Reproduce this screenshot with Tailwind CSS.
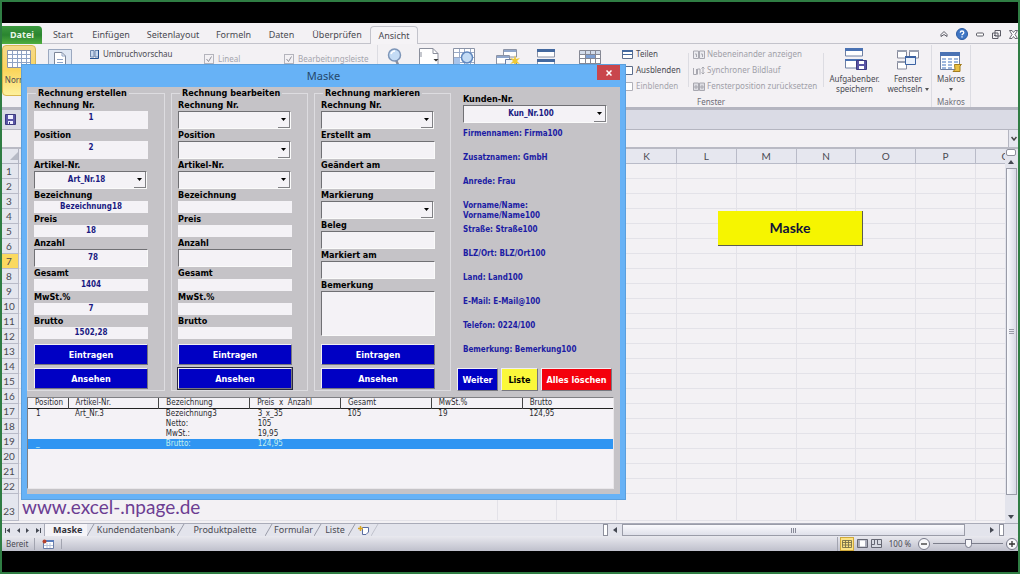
<!DOCTYPE html>
<html lang="de">
<head>
<meta charset="utf-8">
<title>Maske</title>
<script src="https://cdn.jsdelivr.net/npm/@tailwindcss/browser@4"></script>
</head>
<body class="h-screen overflow-hidden border-2 border-[#2f7d43] bg-black py-[21px] font-['Noto_Sans','Open_Sans',sans-serif] text-[9px] leading-3 text-[#4a4a52]">
<div class="relative flex h-full flex-col bg-[#f3f1f4]">

  <!-- Ribbon tabs -->
  <header class="flex h-[21px] shrink-0 items-end border-b border-[#c3c3cb]">
    <nav class="-mb-px flex h-[18px] items-stretch text-center">
      <a href="#" class="flex w-10 items-center justify-center rounded-tr-sm bg-linear-to-b from-[#3c9a3f] via-[#2a8530] to-[#4fae3e] font-bold text-[#e9f6e6]">Datei</a>
      <a href="#" class="flex w-[42px] items-center justify-center">Start</a>
      <a href="#" class="flex w-[54px] items-center justify-center">Einfügen</a>
      <a href="#" class="flex w-[70px] items-center justify-center">Seitenlayout</a>
      <a href="#" class="flex w-[51px] items-center justify-center">Formeln</a>
      <a href="#" class="flex w-[45px] items-center justify-center">Daten</a>
      <a href="#" class="flex w-[66px] items-center justify-center">Überprüfen</a>
      <a href="#" class="flex w-12 items-center justify-center rounded-t-sm border border-b-0 border-[#c3c3cb] bg-[#f5f3f6]">Ansicht</a>
    </nav>
    <div class="ml-auto flex h-[18px] items-center gap-2">
      <button aria-label="Menüband minimieren"><svg class="h-2 w-2" viewBox="0 0 8 8" fill="none" stroke="#5c5c66"><path d="M1 4.500 4 1.500 7 4.500V6.500L4 4.500 1 6.500Z"/></svg></button>
      <button aria-label="Hilfe"><svg class="h-3 w-3" viewBox="0 0 12 12"><circle cx="6" cy="6" r="5.500" fill="#3f76c4" stroke="#2b5aa0"/><path d="M4.200 4.600Q4.300 3 6 3T7.800 4.600Q7.800 5.500 6.700 6.100Q6 6.500 6 7.200M6 8.300V9.500" fill="none" stroke="#fff" stroke-width="1.300"/></svg></button>
      <button aria-label="Minimieren"><svg class="h-2 w-2" viewBox="0 0 8 8"><rect x=".5" y="3" width="7" height="3" rx="1" fill="#fff" stroke="#5c5c66"/></svg></button>
      <button aria-label="Wiederherstellen"><svg class="h-[9px] w-[9px]" viewBox="0 0 9 9" fill="#f3f1f4" stroke="#5c5c66"><path d="M3 .5H8.500V6H3ZM.5 3H6V8.500H.5ZM2 5.500H4.500"/></svg></button>
      <button aria-label="Schließen"><svg class="h-[9px] w-[9px]" viewBox="0 0 9 9" fill="#fff" stroke="#5c5c66" stroke-width=".9"><path d="M.5.5H3L4.500 2.500 6 .5H8.500L6 4.500 8.500 8.500H6L4.500 6.500 3 8.500H.5L3 4.500Z"/></svg></button>
    </div>
  </header>

  <!-- Ribbon body -->
  <section class="flex h-[63px] shrink-0 pt-px text-[8px]">
    <button class="flex h-[51px] w-[34px] flex-col items-center gap-1.5 rounded-sm border border-[#d9b750] bg-linear-to-b from-[#f6d98a] via-[#fbd55b] to-[#fdf09b] pt-1">
      <svg class="h-[18px] w-6" viewBox="0 0 24 18"><path d="M.5.5H23.500V17.500H.5Z" fill="#fff" stroke="#8a93a8"/><path d="M1 4.500H23M1 8.500H23M1 12.500H23M5.500 1V17M10.500 1V17M14.500 1V17M19.500 1V17" stroke="#8fa3c4"/></svg>
      <span>Normal</span>
    </button>
    <button aria-label="Seitenlayout" class="flex w-12 justify-center pt-1"><svg class="h-[22px] w-6" viewBox="0 0 24 22"><path d="M.5.5H23.500V21.500H.5Z" fill="#dfe7f3" stroke="#9ba8bf"/><path d="M6.500 3.500H14L17.500 7V21.500H6.500Z" fill="#fff" stroke="#7d8799"/><path d="M14 3.500V7H17.500M9 10.500H15M9 13.500H15M9 16.500H15" fill="none" stroke="#8fa3c4"/></svg></button>
    <button class="flex h-[18px] w-[119px] items-center gap-1 pl-1.5"><svg class="h-[9px] w-[9px]" viewBox="0 0 9 9"><path d="M.5.5H4V7H.5ZM5 .5H8.500V7H5Z" fill="#c9d8ee" stroke="#6c86ae"/><path d="M8.500 0V8.500H0" fill="none" stroke="#24508f"/></svg>Umbruchvorschau</button>
    <label class="flex h-7 w-20 items-center gap-1 pl-px text-[#a5a5ad]"><input type="checkbox" checked disabled class="peer hidden"><svg class="h-2.5 w-2.5" viewBox="0 0 10 10" fill="none"><rect x=".5" y=".5" width="9" height="9" stroke="#b4b4bc"/><path d="M2.500 5 4.500 7.500 7.500 2.500" stroke="#90909a"/></svg>Lineal</label>
    <label class="flex h-7 w-[95px] items-center gap-1 border-r border-[#dcdce2] pl-px text-[#a5a5ad]"><input type="checkbox" checked disabled class="peer hidden"><svg class="h-2.5 w-2.5 shrink-0" viewBox="0 0 10 10" fill="none"><rect x=".5" y=".5" width="9" height="9" stroke="#b4b4bc"/><path d="M2.500 5 4.500 7.500 7.500 2.500" stroke="#90909a"/></svg>Bearbeitungsleiste</label>
    <button aria-label="Zoom" class="flex w-[34px] justify-center pt-[3px]"><svg class="h-5 w-4" viewBox="0 0 16 20"><path d="M9 12 12 19" stroke="#8b8f9c" stroke-width="2.500"/><circle cx="7.500" cy="7" r="6" fill="#c4dcf5" stroke="#7d95b8" stroke-width="1.500"/><path d="M4 6Q5 3 8 3" stroke="#fff" stroke-width="1.500" fill="none"/></svg></button>
    <button aria-label="100%" class="flex w-[34px] justify-center pt-[3px]"><svg class="h-5 w-5" viewBox="0 0 20 20"><path d="M.5.5H14L19 5.500V20H.5Z" fill="#fff" stroke="#8b8f9c"/><path d="M14 .5V5.500H19M2 4V9" fill="none" stroke="#8b8f9c"/><path d="M14.500 11H19.500L17 13.500Z" fill="#333"/></svg></button>
    <button aria-label="Auswahlzoom" class="flex w-9 justify-center pt-[3px]"><svg class="h-5 w-[22px]" viewBox="0 0 22 20"><path d="M.5.5H21.500V20H.5Z" fill="#fff" stroke="#8b93a6"/><path d="M1 4.500H21M1 9.500H21M1 14.500H21M6.500 1V20M11.500 1V20M17.500 1V20" stroke="#9aabc8"/><path d="M1 10H7V20H1Z" fill="#a9c4ea"/><circle cx="14" cy="9.500" r="5.500" fill="#c4dcf5" stroke="#5f86bd" stroke-width="1.500"/></svg></button>
    <button aria-label="Neues Fenster" class="flex w-[52px] justify-center pt-1"><svg class="h-[18px] w-6" viewBox="0 0 24 18"><path d="M7.500.5H20.500V8H7.500ZM.5 6.500H13.500V15H.5Z" fill="#fff" stroke="#8b93a6"/><path d="M8 1H20V3H8ZM1 7H13V9H1Z" fill="#8fa6cb"/><path d="M9.500 10.500H20.500V18H9.500Z" fill="#eef3fa" stroke="#6a7fa6"/><path d="M19 6 20 10 24 9 21 12 24 15 20 14 19 18 18 14 14 15 17 12 14 9 18 10Z" fill="#f1ca37"/></svg></button>
    <button aria-label="Alle anordnen" class="flex w-6 justify-center pt-1"><svg class="h-[18px] w-[18px]" viewBox="0 0 18 18"><path d="M.5.5H17.500V8H.5ZM.5 10.500H17.500V18H.5Z" fill="#fff" stroke="#8b93a6"/><path d="M0 0H18V3H0ZM0 10H18V13H0Z" fill="#44699f"/></svg></button>
    <button aria-label="Fenster einfrieren" class="flex w-16 justify-center pt-[5px]"><svg class="h-[18px] w-[22px]" viewBox="0 0 22 18"><path d="M.5.5H21.500V18H.5Z" fill="#fff" stroke="#858894"/><path d="M1 1H21V4H1Z" fill="#d3dcea"/><path d="M1 4.500H21M1 8.500H21M1 13.500H21M6.500 1V18M11.500 1V18M16.500 1V18" stroke="#858894"/><path d="M7 5H16V8H7Z" fill="#7ea0d3"/></svg></button>
    <div class="flex w-[66px] flex-col items-start gap-1 pt-[3px]">
      <button class="flex items-center gap-[3px]"><svg class="h-[9px] w-[11px]" viewBox="0 0 11 9"><path d="M.5.5H10.500V8.500H.5Z" fill="#fff" stroke="#5c6d8c"/><path d="M0 0H11V2H0ZM1 4H10V5H1Z" fill="#44699f"/></svg>Teilen</button>
      <button class="flex items-center gap-[3px]"><svg class="h-[9px] w-[11px]" viewBox="0 0 11 9"><path d="M.5.5H10.500V8.500H.5Z" fill="#fff" stroke="#5c6d8c"/></svg>Ausblenden</button>
      <button class="flex items-center gap-[3px] text-[#a5a5ad]"><svg class="h-[9px] w-[11px]" viewBox="0 0 11 9"><path d="M.5.5H10.500V8.500H.5Z" fill="#fff" stroke="#b0b0b8"/></svg>Einblenden</button>
    </div>
    <div class="mt-2 mb-5 w-px bg-[#dcdce2]"></div>
    <div class="flex w-[134px] flex-col items-start gap-1 pt-[3px] pl-1 whitespace-nowrap text-[#a0a0a8]">
      <button class="flex items-center gap-0.5"><svg class="h-[9px] w-3" viewBox="0 0 12 9" fill="#ececf0" stroke="#a8a8b0"><path d="M.5 1H5.500V8.500H.5ZM6.500 1H11.500V8.500H6.500ZM2 4H3.500V7M8 4H9.500V7"/></svg>Nebeneinander anzeigen</button>
      <button class="flex items-center gap-0.5"><svg class="h-[9px] w-3" viewBox="0 0 12 9" fill="none" stroke="#a8a8b0"><path d="M.5 2V8.500H3.500V3M4.500 8.500V3H7V8.500M10 1V8M8.500 2.500 10 1 11.500 2.500M8.500 6.500 10 8 11.500 6.500"/></svg>Synchroner Bildlauf</button>
      <button class="flex items-center gap-0.5"><svg class="h-[9px] w-3" viewBox="0 0 12 9" fill="#dcdce2" stroke="#a8a8b0"><path d="M.5 1H5.500V8.500H.5ZM6.500 1H11.500V8.500H6.500ZM1 5H5M3 3V7M7 5H11M9 3V7"/></svg>Fensterposition zurücksetzen</button>
      <span class="pl-1 text-[#6d6d77]">Fenster</span>
    </div>
    <div class="mt-2 mb-5 w-px bg-[#dcdce2]"></div>
    <button class="flex w-[61px] flex-col items-center pt-[3px] leading-2.5"><svg class="mb-1 h-[22px] w-6" viewBox="0 0 24 22"><path d="M2.500.5H19.500V8H2.500ZM2.500 11.500H19.500V20H2.500Z" fill="#fff" stroke="#6e80a3"/><path d="M2 0H20V3H2ZM2 11H20V13H2Z" fill="#4a72b3"/><path d="M13.500 12.500H23.500V21.500H13.500Z" fill="#5a55a5" stroke="#3c3a80"/><path d="M16 13H21V16H16ZM16 18H21V21H16Z" fill="#fff"/></svg>Aufgabenber.<br>speichern</button>
    <button class="flex w-[46px] flex-col items-center pt-[5px] leading-2.5"><svg class="mb-1 h-5 w-[22px]" viewBox="0 0 22 20"><path d="M.5.5H9.500V8H.5ZM12.500.5H21.500V8H12.500ZM.5 11.500H9.500V19H.5Z" fill="#fff" stroke="#85889a"/><path d="M0 0H10V2H0ZM12 0H22V2H12ZM0 11H10V13H0Z" fill="#9aa0b0"/><path d="M8.500 6.500H18.500V14.500H8.500Z" fill="#eaf1fb" stroke="#3b62a3"/><path d="M8 6H19V8H8Z" fill="#3b62a3"/></svg>Fenster<span>wechseln <svg class="inline h-[3px] w-1" viewBox="0 0 4 3"><path d="M0 0H4L2 3Z" fill="#555"/></svg></span></button>
    <div class="flex w-10 flex-col items-center border-x border-[#dcdce2]">
      <button class="flex flex-col items-center pt-[7px] leading-2.5"><svg class="mb-0.5 h-5 w-[22px]" viewBox="0 0 22 20"><path d="M.5.5H19.500V17.500H.5Z" fill="#fff" stroke="#6e80a3"/><path d="M0 0H20V4H0Z" fill="#4a72b3"/><path d="M2 7H6M8 7H12M14 7H18M2 10H6M8 10H12M14 10H18M2 13H6M8 13H12M2 16H6M8 16H12" stroke="#9fb8de" stroke-width="2"/><path d="M14.500 12.500H21.500L20 14V19.500H13L15 17.500Z" fill="#e9c044" stroke="#a37d1d"/></svg>Makros<svg class="mt-1 h-[3px] w-1" viewBox="0 0 4 3"><path d="M0 0H4L2 3Z" fill="#555"/></svg></button>
      <span class="mt-[5px] text-[#6d6d77]">Makros</span>
    </div>
  </section>

  <!-- Quick access toolbar -->
  <div class="flex h-[23px] shrink-0 items-center border-y border-t-3 border-[#b4b5c0] bg-[#dadbe5] pl-[3px]">
    <button aria-label="Speichern"><svg class="h-[11px] w-[11px]" viewBox="0 0 11 11"><path d="M.5.5H10.500V10.500H.5Z" fill="#5a55a5" stroke="#3c3a80"/><path d="M3 1H8V5H3ZM3 7H8V10H3Z" fill="#eef"/><path d="M4 8H5V10H4Z" fill="#3c3a80"/></svg></button>
  </div>
  <!-- Formula bar -->
  <div class="flex h-[19px] shrink-0 border-b-2 border-[#b9bac4]">
    <input aria-label="Bearbeitungsleiste" class="min-w-0 flex-1 bg-transparent outline-none">
    <button aria-label="Bearbeitungsleiste erweitern" class="flex w-2.5 items-center justify-center border-l border-[#b4b5c0] bg-[#e6e7ef]"><svg class="h-[5px] w-1.5" viewBox="0 0 6 5" fill="none" stroke="#444" stroke-width="1.500"><path d="M.5 1 3 4 5.500 1"/></svg></button>
  </div>

  <!-- Worksheet -->
  <main class="flex min-h-0 flex-1">
    <div class="relative min-w-0 flex-1 overflow-hidden">
      <table class="w-[1034px] table-fixed border-separate border-spacing-0 font-[Lato,'Noto_Sans',sans-serif] text-[10px] leading-3.5">
        <thead><tr id="heads"><th class="h-[15px] w-[17px] border-r border-b border-[#b0b3c0] bg-[#e4e6ee] p-0"><svg class="ml-auto h-2 w-2" viewBox="0 0 8 8"><path d="M8 0V8H0Z" fill="#b6bac6"/></svg></th></tr></thead>
        <tbody id="rows"></tbody>
      </table>
      <button class="absolute top-[62px] left-[716px] h-[35px] w-[145px] border-r border-b border-[#5c5c50] bg-[#f6f500] font-[Lato,sans-serif] text-[14px] font-bold text-[#12123a]">Maske</button>
    </div>
    <div class="flex w-[13px] flex-col items-center bg-[#e3e4ec] pr-px">
      <div class="h-[7px] w-2.5 rounded-xs border border-[#8e909c] bg-white"></div>
      <button aria-label="Nach oben" class="flex h-3 items-center"><svg class="h-1 w-1.5" viewBox="0 0 6 4"><path d="M0 4 3 0 6 4Z" fill="#444852"/></svg></button>
      <div class="flex w-[11px] flex-1 items-center justify-center border border-[#9a9ca8] bg-linear-to-r from-[#fafafd] to-[#d8dae6]"><svg class="h-[5px] w-[5px]" viewBox="0 0 5 5" stroke="#999ba8"><path d="M0 .5H5M0 2.500H5M0 4.500H5"/></svg></div>
      <button aria-label="Nach unten" class="flex h-7 items-end pb-1"><svg class="h-1 w-1.5" viewBox="0 0 6 4"><path d="M0 0H6L3 4Z" fill="#444852"/></svg></button>
    </div>
  </main>

  <!-- Sheet tabs and horizontal scroll bar -->
  <div class="flex h-[13px] shrink-0 items-stretch border-t border-[#a9abb8] bg-[#e3e4ec]">
    <div class="flex w-[43px] items-center justify-around border-r border-[#a9abb8] text-[#444852]">
      <button aria-label="Erstes Blatt"><svg class="h-[5px] w-[5px]" viewBox="0 0 5 5" fill="currentColor"><path d="M0 0H1V5H0ZM5 0V5L1.500 2.500Z"/></svg></button>
      <button aria-label="Vorheriges Blatt"><svg class="h-[5px] w-[3px]" viewBox="0 0 3 5" fill="currentColor"><path d="M3 0V5L0 2.500Z"/></svg></button>
      <button aria-label="Nächstes Blatt"><svg class="h-[5px] w-[3px]" viewBox="0 0 3 5" fill="currentColor"><path d="M0 0V5L3 2.500Z"/></svg></button>
      <button aria-label="Letztes Blatt"><svg class="h-[5px] w-[5px]" viewBox="0 0 5 5" fill="currentColor"><path d="M4 0H5V5H4ZM0 0V5L3.500 2.500Z"/></svg></button>
    </div>
    <nav class="flex items-center">
      <a href="#" class="w-[42px] bg-[#f5f4f8] pl-2 font-bold text-[#33333b]">Maske</a>
      <svg class="h-3 w-2" viewBox="0 0 8 12"><path d="M0 12 7 0" stroke="#9a9ca8"/></svg>
      <a href="#" class="w-[82px] text-center">Kundendatenbank</a>
      <svg class="h-3 w-2" viewBox="0 0 8 12"><path d="M0 12 7 0" stroke="#9a9ca8"/></svg>
      <a href="#" class="w-20 text-center">Produktpalette</a>
      <svg class="h-3 w-2" viewBox="0 0 8 12"><path d="M0 12 7 0" stroke="#9a9ca8"/></svg>
      <a href="#" class="w-[41px] text-center">Formular</a>
      <svg class="h-3 w-2" viewBox="0 0 8 12"><path d="M0 12 7 0" stroke="#9a9ca8"/></svg>
      <a href="#" class="w-[26px] text-center">Liste</a>
      <svg class="h-3 w-2" viewBox="0 0 8 12"><path d="M0 12 7 0" stroke="#9a9ca8"/></svg>
      <button aria-label="Tabellenblatt einfügen" class="px-0.5"><svg class="h-[9px] w-[11px]" viewBox="0 0 11 9"><path d="M4.500 1.500H10.500V6L8 8.500H4.500Z" fill="#fff" stroke="#5a6da0"/><path d="M2.500 0V5M0 2.500H5" stroke="#d9a520" stroke-width="1.500"/></svg></button>
      <svg class="h-3 w-2" viewBox="0 0 8 12"><path d="M0 12 7 0" stroke="#c0c2cc"/></svg>
    </nav>
    <div class="ml-auto flex w-[415px] items-stretch gap-[3px]">
      <div class="w-[5px] border border-[#8e909c] bg-white"></div>
      <button aria-label="Nach links" class="flex w-2 items-center justify-center"><svg class="h-1.5 w-1" viewBox="0 0 4 6"><path d="M4 0V6L0 3Z" fill="#444852"/></svg></button>
      <div class="flex w-[343px] items-center justify-center border border-[#9a9ca8] bg-linear-to-b from-[#fafafd] to-[#dfe0ea]"><svg class="h-[5px] w-[5px]" viewBox="0 0 5 5" stroke="#888a98"><path d="M.5 0V5M2.500 0V5M4.500 0V5"/></svg></div>
      <button aria-label="Nach rechts" class="ml-auto flex w-2 items-center justify-center"><svg class="h-1.5 w-1" viewBox="0 0 4 6"><path d="M0 0V6L4 3Z" fill="#444852"/></svg></button>
      <div class="mr-3.5 w-[5px] border border-[#8e909c] bg-white"></div>
    </div>
  </div>

  <!-- Status bar -->
  <footer class="flex h-[15px] shrink-0 items-center bg-linear-to-b from-[#e9e9ef] to-[#bfc0cc] pl-1 text-[8px]">
    <span class="w-[29px] border-r border-[#a2a4b0]">Bereit</span>
    <button aria-label="Makro aufzeichnen" class="flex w-[27px] justify-center border-r border-[#a2a4b0]"><svg class="h-2.5 w-3" viewBox="0 0 12 10"><path d="M1.500 1.500H11.500V9.500H1.500Z" fill="#fff" stroke="#6a7da8"/><path d="M1 1H12V3H1Z" fill="#5a7dbd"/><circle cx="2.500" cy="2.500" r="2" fill="#b5432f"/><path d="M5 4V9M8 4V9M2 6.500H11" stroke="#b9c6de"/></svg></button>
    <div class="ml-auto flex items-center gap-[3px] border-l border-[#a2a4b0] pl-0.5">
      <button aria-label="Normal" class="flex h-[14px] w-[14px] items-center justify-center border border-[#d0a93a] bg-[#fbe283]"><svg class="h-2 w-2.5" viewBox="0 0 10 8" fill="none" stroke="#77704a"><path d="M.5.5H9.500V7.500H.5ZM0 2.500H10M0 5H10M3.500 0V8M6.500 0V8" stroke-width=".9"/></svg></button>
      <button aria-label="Seitenlayout"><svg class="h-[9px] w-[11px]" viewBox="0 0 11 9"><path d="M.5.5H10.500V8.500H.5Z" fill="#a9abb8" stroke="#666874"/><path d="M3 1.500H8V7.500H3Z" fill="#fff"/></svg></button>
      <button aria-label="Umbruchvorschau"><svg class="h-[9px] w-[11px]" viewBox="0 0 11 9"><path d="M.5.5H10.500V8.500H.5Z" fill="#d8dae2" stroke="#666874"/><path d="M3.500 1V5.500H.5M6.500 1V5.500H10" fill="none" stroke="#666874"/></svg></button>
      <span class="w-[30px] text-center">100 %</span>
      <button aria-label="Verkleinern"><svg class="h-3 w-3" viewBox="0 0 12 12"><circle cx="6" cy="6" r="5.500" fill="#f7f7fa" stroke="#77798a"/><path d="M3 6H9" stroke="#333" stroke-width="1.300"/></svg></button>
      <label class="flex items-center"><span class="sr-only">Zoom</span><input type="range" value="50" class="h-3 w-[70px] appearance-none bg-transparent [&::-webkit-slider-runnable-track]:h-px [&::-webkit-slider-runnable-track]:bg-[#7d7f8c] [&::-webkit-slider-thumb]:-mt-1 [&::-webkit-slider-thumb]:h-[9px] [&::-webkit-slider-thumb]:w-[7px] [&::-webkit-slider-thumb]:appearance-none [&::-webkit-slider-thumb]:rounded-b-sm [&::-webkit-slider-thumb]:border [&::-webkit-slider-thumb]:border-[#77798a] [&::-webkit-slider-thumb]:bg-[#f7f7fa]"></label>
      <button aria-label="Vergrößern"><svg class="h-3 w-3" viewBox="0 0 12 12"><circle cx="6" cy="6" r="5.500" fill="#f7f7fa" stroke="#77798a"/><path d="M3 6H9M6 3V9" stroke="#333" stroke-width="1.300"/></svg></button>
    </div>
  </footer>

  <!-- Form window -->
  <div role="dialog" aria-labelledby="dlg" class="absolute top-[41px] left-[19px] flex w-[605px] flex-col border border-[#5b9fdd] bg-[#67b2f6] px-[5px] pb-[5px] font-['DejaVu_Sans_Condensed','DejaVu_Sans',sans-serif] text-black">
    <div class="relative flex h-[22px] items-center justify-center font-['Noto_Sans',sans-serif] text-[11px] text-[#25476b]">
      <h1 id="dlg">Maske</h1>
      <button aria-label="Schließen" class="absolute top-0 right-0 flex h-[15px] w-[23px] items-center justify-center bg-[#c9464c]"><svg class="h-1.5 w-1.5" viewBox="0 0 6 6" stroke="#fff" stroke-width="1.500"><path d="M.5.5 5.500 5.500M5.500.5.5 5.500"/></svg></button>
    </div>
    <div class="bg-[#c5c3c7] pb-[5px]">
      <form class="flex gap-1.5 text-[9px] font-bold" onsubmit="return false">
        <fieldset id="f1" class="flex w-[138px] flex-col border border-[#dddce0] px-1.5 pb-px"><legend class="ml-0.5 px-0.5">Rechnung erstellen</legend></fieldset>
        <fieldset id="f2" class="flex w-[137px] flex-col border border-[#dddce0] px-1.5 pb-px"><legend class="ml-0.5 px-0.5">Rechnung bearbeiten</legend></fieldset>
        <fieldset id="f3" class="flex w-[137px] flex-col border border-[#dddce0] px-1.5 pb-px"><legend class="ml-0.5 px-0.5">Rechnung markieren</legend></fieldset>
        <div class="flex flex-1 flex-col pt-1.5">
          <div class="mb-1.5 ml-1.5 flex w-[144px] flex-col">
            <label for="kunde">Kunden-Nr.</label>
            <div class="relative h-[18px] border border-[#fafafa] border-t-[#707074] border-l-[#707074] bg-[#f4f2f6]">
              <select id="kunde" class="h-full w-full appearance-none pr-2 text-center text-[8px] font-bold text-[#1a1a82]"><option>Kun_Nr.100</option></select>
              <span class="pointer-events-none absolute inset-y-0 right-0 flex w-3 items-center justify-center border-r border-b border-[#808084] bg-[#f4f2f6]"><svg class="h-[3px] w-[5px]" viewBox="0 0 5 3"><path d="M0 0H5L2.500 3Z"/></svg></span>
            </div>
          </div>
          <div class="ml-1.5 flex flex-col text-[8px] leading-2.5 text-[#1c1ca4]">
            <p class="h-6">Firmennamen: Firma100</p>
            <p class="h-6">Zusatznamen: GmbH</p>
            <p class="h-6">Anrede: Frau</p>
            <p class="h-6">Vorname/Name:<br>Vorname/Name100</p>
            <p class="h-6">Straße: Straße100</p>
            <p class="h-6">BLZ/Ort: BLZ/Ort100</p>
            <p class="h-6">Land: Land100</p>
            <p class="h-6">E-Mail: E-Mail@100</p>
            <p class="h-6">Telefon: 0224/100</p>
            <p class="h-6">Bemerkung: Bemerkung100</p>
          </div>
          <div class="-mt-px flex gap-[3px]">
            <button class="h-[23px] w-[41px] border border-[#f0eef2] border-r-[#77777f] border-b-[#77777f] bg-[#0000c4] whitespace-nowrap text-white">Weiter</button>
            <button class="h-[23px] w-[37px] border border-[#f0eef2] border-r-[#77777f] border-b-[#77777f] bg-[#fbf83a]">Liste</button>
            <button class="h-[23px] w-[71px] border border-[#f0eef2] border-r-[#77777f] border-b-[#77777f] bg-[#f4000c] whitespace-nowrap text-white">Alles löschen</button>
          </div>
        </div>
      </form>
      <div class="mt-1.5 mr-1.5 h-[92px] border border-[#e9e7ea] border-t-[#808084] border-l-[#808084] bg-[#f4f2f6]">
        <table class="w-full table-fixed border-collapse text-left text-[8px] leading-2.5 text-[#2a2a2e]">
          <thead class="border-b border-[#222]">
            <tr><th class="w-10 border-r border-[#444] p-0 pl-[7px] font-normal">Position</th><th class="border-r border-[#444] p-0 pl-[7px] font-normal">Artikel-Nr.</th><th class="border-r border-[#444] p-0 pl-[7px] font-normal">Bezeichnung</th><th class="border-r border-[#444] p-0 pl-[7px] font-normal">Preis&nbsp; x&nbsp; Anzahl</th><th class="border-r border-[#444] p-0 pl-[7px] font-normal">Gesamt</th><th class="border-r border-[#444] p-0 pl-[7px] font-normal">MwSt.%</th><th class="p-0 pl-[7px] font-normal">Brutto</th></tr>
          </thead>
          <tbody>
            <tr><td class="p-0 pl-2">1</td><td class="p-0 pl-[7px]">Art_Nr.3</td><td class="p-0 pl-[7px]">Bezeichnung3</td><td class="p-0 pl-2">3_x_35</td><td class="p-0 pl-[7px]">105</td><td class="p-0 pl-[7px]">19</td><td class="p-0 pl-[7px]">124,95</td></tr>
            <tr><td></td><td></td><td class="p-0 pl-[7px]">Netto:</td><td class="p-0 pl-2">105</td><td></td><td></td><td></td></tr>
            <tr><td></td><td></td><td class="p-0 pl-[7px]">MwSt.:</td><td class="p-0 pl-2">19,95</td><td></td><td></td><td></td></tr>
            <tr class="bg-[#2f95f2] text-[#c4f1ee]"><td class="p-0 pl-2">_</td><td></td><td class="p-0 pl-[7px]">Brutto:</td><td class="p-0 pl-2">124,95</td><td></td><td></td><td></td></tr>
          </tbody>
        </table>
      </div>
    </div>
  </div>
</div>

<script>
  // Worksheet grid
  const heads = document.getElementById('heads');
  for (const c of 'ABCDEFGHIJKLMNOPQ') {
    heads.insertAdjacentHTML('beforeend', `<th class="h-[15px] border-r border-b border-[#b9bbc8] bg-[#e6e7ef] p-0 font-normal">${c}</th>`);
  }
  const rows = document.getElementById('rows');
  for (let r = 1; r <= 23; r++) {
    const tall = r === 23 ? 'h-[27px]' : 'h-[15px]';
    const tint = r === 7 ? 'bg-[#fbd960]' : 'bg-[#e4e6ee]';
    let html = `<th class="${tall} ${tint} border-r border-b border-[#b9bbc8] p-0 ${r === 23 ? 'pt-2' : ''} pr-0.5 text-center font-normal">${r}</th>`;
    // The web address in the last row spans the merged cells A to H
    if (r === 23) html += '<td colspan="8" class="border-r border-b border-[#e3e2e8] p-0 pl-[3px] text-[19px] leading-6"><a href="#" class="text-[#6c3d92]">www.excel-.npage.de</a></td>';
    for (let c = r === 23 ? 8 : 0; c < 17; c++) html += '<td class="border-r border-b border-[#e3e2e8] p-0"></td>';
    rows.insertAdjacentHTML('beforeend', `<tr>${html}</tr>`);
  }

  // Form columns: [label, kind, value]
  const arrow = '<span class="pointer-events-none absolute inset-y-0 right-0 flex w-3 items-center justify-center border-r border-b border-[#808084] bg-[#f4f2f6]"><svg class="h-[3px] w-[5px]" viewBox="0 0 5 3"><path d="M0 0H5L2.500 3Z"/></svg></span>';
  const field = (id, [label, kind, value = '']) => {
    const caption = `<label for="${id}" class="h-3">${label}</label>`;
    if (kind === 'select') return caption + `<div class="relative mr-2 h-[18px] w-[113px] border border-[#fafafa] border-t-[#707074] border-l-[#707074] bg-[#f4f2f6]"><select id="${id}" class="h-full w-full appearance-none pr-2 text-center text-[8px] font-bold text-[#1a1a82]"><option>${value}</option></select>${arrow}</div>`;
    if (kind === 'area') return caption + `<textarea id="${id}" class="h-[45px] w-[114px] resize-none border border-[#fafafa] border-t-[#707074] border-l-[#707074] bg-[#f4f2f6]"></textarea>`;
    if (kind === 'sunken') return caption + `<input id="${id}" value="${value}" class="h-[18px] w-[114px] border border-[#fafafa] border-t-[#707074] border-l-[#707074] bg-[#f4f2f6] pb-0.5 pl-1 text-center text-[8px] font-bold text-[#1a1a82]">`;
    if (kind === 'flat') return caption + `<input id="${id}" value="${value}" class="h-[18px] w-[114px] bg-[#f4f2f6] pb-1.5 text-center text-[8px] font-bold text-[#1a1a82]">`;
    return caption + `<input id="${id}" value="${value}" class="h-3 w-[114px] bg-[#f4f2f6] pb-px text-center text-[8px] font-bold text-[#1a1a82]">`;
  };
  const columns = {
    f1: [['Rechnung Nr.', 'flat', '1'], ['Position', 'flat', '2'], ['Artikel-Nr.', 'select', 'Art_Nr.18'], ['Bezeichnung', 'slim', 'Bezeichnung18'], ['Preis', 'slim', '18'], ['Anzahl', 'sunken', '78'], ['Gesamt', 'slim', '1404'], ['MwSt.%', 'slim', '7'], ['Brutto', 'slim', '1502,28']],
    f2: [['Rechnung Nr.', 'select'], ['Position', 'select'], ['Artikel-Nr.', 'select'], ['Bezeichnung', 'slim'], ['Preis', 'slim'], ['Anzahl', 'sunken'], ['Gesamt', 'slim'], ['MwSt.%', 'slim'], ['Brutto', 'slim']],
    f3: [['Rechnung Nr.', 'select'], ['Erstellt am', 'sunken'], ['Geändert am', 'sunken'], ['Markierung', 'select'], ['Beleg', 'sunken'], ['Markiert am', 'sunken'], ['Bemerkung', 'area']],
  };
  for (const [id, list] of Object.entries(columns)) {
    const ring = id === 'f2' ? 'outline outline-[#2a2a40]' : '';
    document.getElementById(id).insertAdjacentHTML('beforeend',
      list.map((f, i) => field(id + i, f)).join('') +
      `<div class="mt-auto flex w-[114px] flex-col gap-[3px]">
        <button class="h-[21px] border border-[#f0eef2] border-r-[#77777f] border-b-[#77777f] bg-[#0000c4] text-white">Eintragen</button>
        <button class="h-[21px] border border-[#f0eef2] border-r-[#77777f] border-b-[#77777f] bg-[#0000c4] text-white ${ring}">Ansehen</button>
      </div>`);
  }
</script>
</body>
</html>
